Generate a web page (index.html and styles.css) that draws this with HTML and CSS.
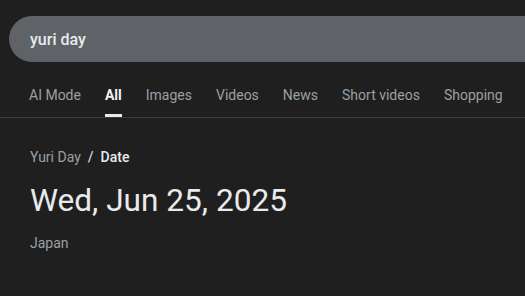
FILE: index.html
```html
<!DOCTYPE html>
<html>
<head>
<meta charset="utf-8">
<link rel="stylesheet" href="styles.css">
</head>
<body>
<div class="page">
  <div class="search-row">
    <div class="search-box"><span class="query">yuri day</span></div>
  </div>
  <nav class="tabs">
    <span class="tab">AI Mode</span>
    <span class="tab active">All</span>
    <span class="tab">Images</span>
    <span class="tab">Videos</span>
    <span class="tab">News</span>
    <span class="tab">Short videos</span>
    <span class="tab">Shopping</span>
  </nav>
  <main class="result">
    <div class="crumbs"><span class="crumb">Yuri Day</span><span class="sep">/</span><span class="crumb current">Date</span></div>
    <div class="answer">Wed, Jun 25, 2025</div>
    <div class="region">Japan</div>
  </main>
</div>
</body>
</html>
```

FILE: styles.css
```css
html, body {
  margin: 0;
  padding: 0;
  background: #1f1f1f;
  font-family: Roboto, "Liberation Sans", Arial, sans-serif;
}
.page {
  width: 525px;
  height: 296px;
  overflow: hidden;
}
.search-row {
  padding: 16px 0 0 9px;
  overflow: hidden;
}
.search-box {
  height: 46px;
  width: 560px;
  border-radius: 23px;
  background: #5f6368;
  display: flex;
  align-items: center;
  padding-left: 21px;
  box-sizing: border-box;
}
.query {
  font-size: 16px;
  font-weight: 500;
  color: #e8eaed;
}
.tabs {
  display: flex;
  margin-top: 18px;
  padding-left: 17px;
  border-bottom: 1px solid #3c3c3c;
  white-space: nowrap;
  overflow: hidden;
}
.tab {
  display: block;
  flex: none;
  padding: 6px 12px 10px;
  font-size: 14px;
  line-height: 18px;
  color: #9aa0a6;
  border-bottom: 3px solid transparent;
}
.tab.active {
  color: #f1f3f4;
  font-weight: 700;
  border-bottom-color: #e8eaed;
  padding-left: 0;
  padding-right: 0;
  margin: 0 12px;
}
.result {
  padding: 29px 0 0 30px;
}
.crumbs {
  font-size: 14px;
  line-height: 20px;
  display: flex;
  align-items: center;
}
.crumb {
  color: #9aa0a6;
}
.sep {
  color: #e8eaed;
  margin: 0 7px;
}
.crumb.current {
  color: #e8eaed;
  font-weight: 500;
}
.answer {
  margin-top: 14px;
  font-size: 31.6px;
  line-height: 40px;
  color: #e8eaed;
}
.region {
  margin-top: 12px;
  font-size: 14px;
  line-height: 20px;
  color: #9aa0a6;
}
```
